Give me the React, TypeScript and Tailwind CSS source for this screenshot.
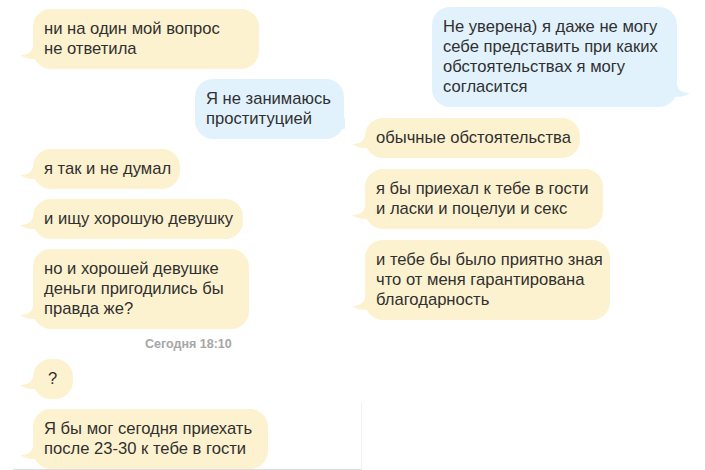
import type { ReactNode } from "react";

type Side = "in" | "out";

function Tail({ side }: { side: Side }) {
  if (side === "in") {
    return (
      <svg
        className="absolute left-[-13px] bottom-[4px] h-[22px] w-[22px] text-[#fdf2cf]"
        viewBox="0 0 22 22"
        fill="currentColor"
      >
        <path d="M13 2 C13 8 9 12 0 12 C6 16 12 17 22 15 L22 2 Z" />
      </svg>
    );
  }
  return (
    <svg
      className="absolute right-[-13px] bottom-[4px] h-[22px] w-[22px] text-[#e2f2fd]"
      viewBox="0 0 22 22"
      fill="currentColor"
    >
      <path d="M9 2 C9 8 13 12 22 12 C16 16 10 17 0 15 L0 2 Z" />
    </svg>
  );
}

function Bubble({ side, w, children }: { side: Side; w: string; children: ReactNode }) {
  return (
    <div
      className={
        "relative whitespace-nowrap rounded-[18px] px-[11px] py-[10px] text-[16.6px] leading-[20px] text-[#303030] " +
        (side === "in" ? "self-start bg-[#fdf2cf] " : "self-end bg-[#e2f2fd] ") +
        w
      }
    >
      <Tail side={side} />
      <div className="relative">{children}</div>
    </div>
  );
}

export default function App() {
  return (
    <div
      className="flex h-[470px] w-[705px] overflow-hidden bg-white"
      style={{ fontFamily: '"Liberation Sans", Arial, sans-serif' }}
    >
      {/* left chat */}
      <div className="ml-[13px] flex h-[470px] w-[349px] shrink-0 flex-col gap-[10px] border-b border-r border-b-[#dedede] border-r-[#f2f2f2] pl-[20px] pt-[9px]">
        <Bubble side="in" w="w-[226px]">
          ни на один мой вопрос
          <br />
          не ответила
        </Bubble>
        <Bubble side="out" w="mr-[17px] w-[149px]">
          Я не занимаюсь
          <br />
          проституцией
        </Bubble>
        <Bubble side="in" w="w-[147px]">
          я так и не думал
        </Bubble>
        <Bubble side="in" w="w-[210px]">
          и ищу хорошую девушку
        </Bubble>
        <Bubble side="in" w="w-[216px]">
          но и хорошей девушке
          <br />
          деньги пригодились бы
          <br />
          правда же?
        </Bubble>
        <div className="-my-[3px] ml-[112px] text-[12.5px] font-semibold leading-[16px] text-[#a6a6a6]">
          Сегодня 18:10
        </div>
        <Bubble side="in" w="w-[40px] pl-[15px]">
          ?
        </Bubble>
        <Bubble side="in" w="w-[235px]">
          Я бы мог сегодня приехать
          <br />
          после 23-30 к тебе в гости
        </Bubble>
      </div>

      {/* right chat */}
      <div className="relative z-10 -ml-[17px] flex h-[402px] flex-1 flex-col gap-[11px] bg-white pl-[20px] pr-[28px] pt-[7px]">
        <Bubble side="out" w="w-[245px]">
          Не уверена) я даже не могу
          <br />
          себе представить при каких
          <br />
          обстоятельствах я могу
          <br />
          согласится
        </Bubble>
        <Bubble side="in" w="w-[215px]">
          обычные обстоятельства
        </Bubble>
        <Bubble side="in" w="w-[238px]">
          я бы приехал к тебе в гости
          <br />и ласки и поцелуи и секс
        </Bubble>
        <Bubble side="in" w="w-[245px]">
          и тебе бы было приятно зная
          <br />
          что от меня гарантирована
          <br />
          благодарность
        </Bubble>
      </div>
    </div>
  );
}
